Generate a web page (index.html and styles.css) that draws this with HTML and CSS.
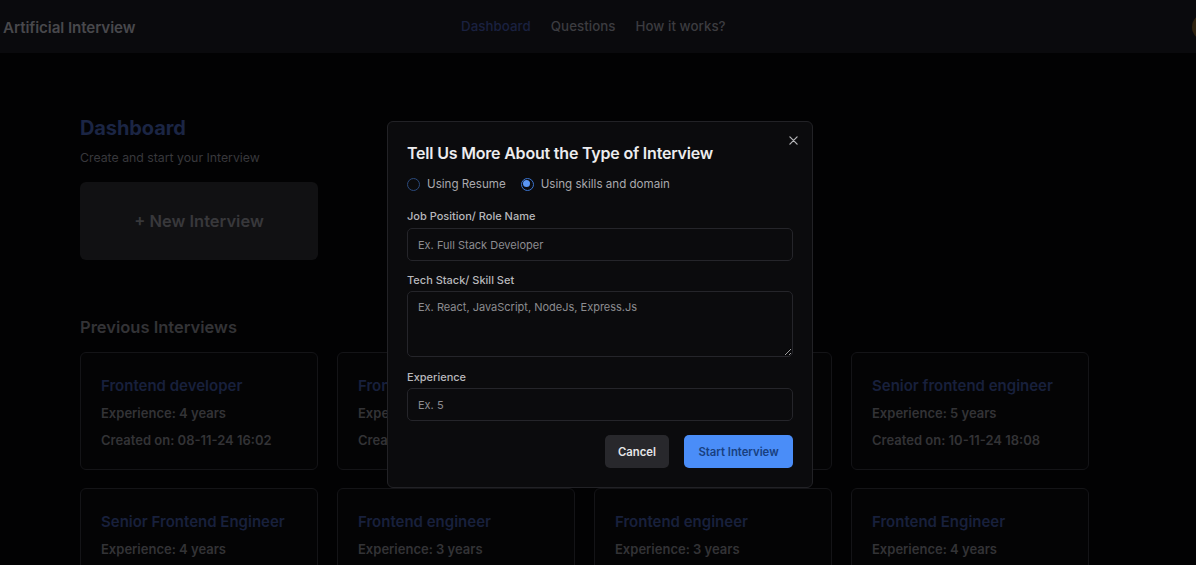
FILE: index.html
```html
<!DOCTYPE html>
<html>
<head>
<meta charset="utf-8">
<link rel="stylesheet" href="styles.css">
</head>
<body>
<header class="topbar">
  <div class="brand">Artificial Interview</div>
  <nav class="nav">
    <span class="nav-link active">Dashboard</span>
    <span class="nav-link">Questions</span>
    <span class="nav-link">How it works?</span>
  </nav>
  <div class="avatar"></div>
</header>

<main class="main">
  <h2 class="page-title">Dashboard</h2>
  <p class="page-sub">Create and start your Interview</p>
  <div class="new-card">+ New Interview</div>

  <h3 class="section-title">Previous Interviews</h3>
  <div class="grid">
    <div class="card"><div class="card-title">Frontend developer</div><div class="card-line">Experience: 4 years</div><div class="card-line">Created on: 08-11-24 16:02</div></div>
    <div class="card"><div class="card-title">Frontend developer</div><div class="card-line">Experience: 4 years</div><div class="card-line">Created on: 09-11-24 10:12</div></div>
    <div class="card"><div class="card-title">Frontend developer</div><div class="card-line">Experience: 4 years</div><div class="card-line">Created on: 09-11-24 12:40</div></div>
    <div class="card"><div class="card-title">Senior frontend engineer</div><div class="card-line">Experience: 5 years</div><div class="card-line">Created on: 10-11-24 18:08</div></div>
    <div class="card"><div class="card-title">Senior Frontend Engineer</div><div class="card-line">Experience: 4 years</div><div class="card-line">Created on: 10-11-24 19:20</div></div>
    <div class="card"><div class="card-title">Frontend engineer</div><div class="card-line">Experience: 3 years</div><div class="card-line">Created on: 11-11-24 09:14</div></div>
    <div class="card"><div class="card-title">Frontend engineer</div><div class="card-line">Experience: 3 years</div><div class="card-line">Created on: 11-11-24 11:02</div></div>
    <div class="card"><div class="card-title">Frontend Engineer</div><div class="card-line">Experience: 4 years</div><div class="card-line">Created on: 12-11-24 15:30</div></div>
  </div>
</main>

<div class="overlay">
  <div class="modal">
    <button class="close" aria-label="Close">
      <svg width="9" height="9" viewBox="0 0 10 10"><path d="M1 1L9 9M9 1L1 9" stroke="#b5b5b8" stroke-width="1.4" stroke-linecap="round"/></svg>
    </button>
    <div class="modal-title">Tell Us More About the Type of Interview</div>
    <div class="radios">
      <label class="radio"><span class="dot"></span>Using Resume</label>
      <label class="radio"><span class="dot checked"></span>Using skills and domain</label>
    </div>
    <div class="field first">
      <div class="label">Job Position/ Role Name</div>
      <input class="input" placeholder="Ex. Full Stack Developer">
    </div>
    <div class="field second">
      <div class="label">Tech Stack/ Skill Set</div>
      <textarea class="input textarea" placeholder="Ex. React, JavaScript, NodeJs, Express.Js"></textarea>
    </div>
    <div class="field third">
      <div class="label">Experience</div>
      <input class="input" placeholder="Ex. 5">
    </div>
    <div class="actions">
      <button class="btn btn-cancel">Cancel</button>
      <button class="btn btn-primary">Start Interview</button>
    </div>
  </div>
</div>
</body>
</html>
```

FILE: styles.css
```css
* { box-sizing: border-box; }
html, body { margin: 0; padding: 0; }
body {
  background: #020203;
  font-family: Inter, "Liberation Sans", sans-serif;
  width: 1196px;
  height: 565px;
  overflow: hidden;
  position: relative;
}
.topbar {
  height: 53px;
  background: #0a0a0d;
  display: flex;
  align-items: center;
  position: relative;
  padding-left: 3px;
}
.brand {
  font-size: 15.2px;
  font-weight: 600;
  color: #48484c;
  letter-spacing: -0.1px;
  padding-top: 2px;
}
.nav {
  position: absolute;
  left: 461px;
  top: 0;
  height: 53px;
  display: flex;
  align-items: center;
  gap: 20px;
  padding-bottom: 1px;
}
.nav-link {
  font-size: 13.3px;
  font-weight: 500;
  color: #3c3c40;
  letter-spacing: 0.05px;
}
.nav-link.active { color: #1a2140; }
.avatar {
  position: absolute;
  right: -24px;
  top: 13px;
  width: 28px;
  height: 28px;
  border-radius: 50%;
  background: #2e2210;
}
.main {
  padding: 0 80px;
}
.page-title {
  margin: 63px 0 0;
  font-size: 20px;
  font-weight: 700;
  line-height: 24px;
  color: #1b2544;
  letter-spacing: -0.1px;
}
.page-sub {
  margin: 10px 0 0;
  font-size: 12.3px;
  line-height: 16px;
  color: #38383c;
}
.new-card {
  margin-top: 16px;
  width: 238px;
  height: 78px;
  background: #111113;
  border-radius: 6px;
  display: flex;
  align-items: center;
  justify-content: center;
  font-size: 16.5px;
  font-weight: 600;
  color: #38383b;
}
.section-title {
  margin: 57px 0 0;
  font-size: 16.5px;
  line-height: 20px;
  font-weight: 600;
  color: #333336;
}
.grid {
  margin-top: 15px;
  display: grid;
  grid-template-columns: repeat(4, 238px);
  column-gap: 19px;
  row-gap: 18px;
}
.card {
  height: 118px;
  border: 1px solid #141417;
  border-radius: 6px;
  background: #040405;
  padding: 24px 20px 0;
}
.card-title {
  font-size: 15px;
  font-weight: 600;
  line-height: 18px;
  color: #18203c;
}
.card-line {
  margin-top: 9px;
  font-size: 13px;
  font-weight: 600;
  line-height: 18px;
  color: #333336;
}
.overlay {
  position: absolute;
  inset: 0;
}
.modal {
  position: absolute;
  left: 387px;
  top: 121px;
  width: 426px;
  background: #0b0b0d;
  border: 1px solid #222226;
  border-radius: 6px;
  padding: 19px 19px 19px;
}
.close {
  position: absolute;
  right: 13px;
  top: 12px;
  width: 12px;
  height: 12px;
  padding: 0;
  border: 0;
  background: none;
  display: flex;
  align-items: center;
  justify-content: center;
}
.modal-title {
  font-size: 16px;
  font-weight: 600;
  line-height: 24px;
  color: #ececee;
  letter-spacing: -0.2px;
}
.radios {
  margin-top: 11px;
  display: flex;
  gap: 15px;
  height: 16px;
  align-items: center;
}
.radio {
  display: flex;
  align-items: center;
  gap: 7px;
  font-size: 11.6px;
  color: #a9a9ad;
}
.dot {
  width: 13px;
  height: 13px;
  border-radius: 50%;
  border: 1.5px solid #2b4a7c;
  display: inline-block;
  position: relative;
}
.dot.checked { border-color: #3b74d0; }
.dot.checked::after {
  content: "";
  position: absolute;
  left: 1.5px;
  top: 1.5px;
  width: 7px;
  height: 7px;
  border-radius: 50%;
  background: #5b97f5;
}
.field.first { margin-top: 17px; }
.field.second { margin-top: 12px; }
.field.third { margin-top: 13px; }
.label {
  font-size: 11px;
  line-height: 14px;
  font-weight: 500;
  color: #b8b8bc;
  margin-bottom: 4px;
}
.field.first .label { margin-bottom: 5px; }
.input {
  display: block;
  width: 386px;
  height: 33px;
  background: #0b0b0d;
  border: 1px solid #25252a;
  border-radius: 5px;
  padding: 0 10px;
  font-family: Inter, "Liberation Sans", sans-serif;
  font-size: 11px;
  color: #ddd;
  outline: none;
}
.input::placeholder { color: #8c8c90; }
.textarea {
  height: 66px;
  padding: 8px 10px;
  resize: vertical;
}
.actions {
  margin-top: 14px;
  display: flex;
  justify-content: flex-end;
  gap: 15px;
}
.btn {
  height: 33px;
  border: 0;
  border-radius: 5px;
  font-family: Inter, "Liberation Sans", sans-serif;
  font-size: 11.3px;
  font-weight: 600;
  padding: 0;
}
.btn-cancel {
  width: 64px;
  background: #28282c;
  color: #e6e6e8;
}
.btn-primary {
  width: 109px;
  background: #4a8df8;
  color: #18407f;
}
```
